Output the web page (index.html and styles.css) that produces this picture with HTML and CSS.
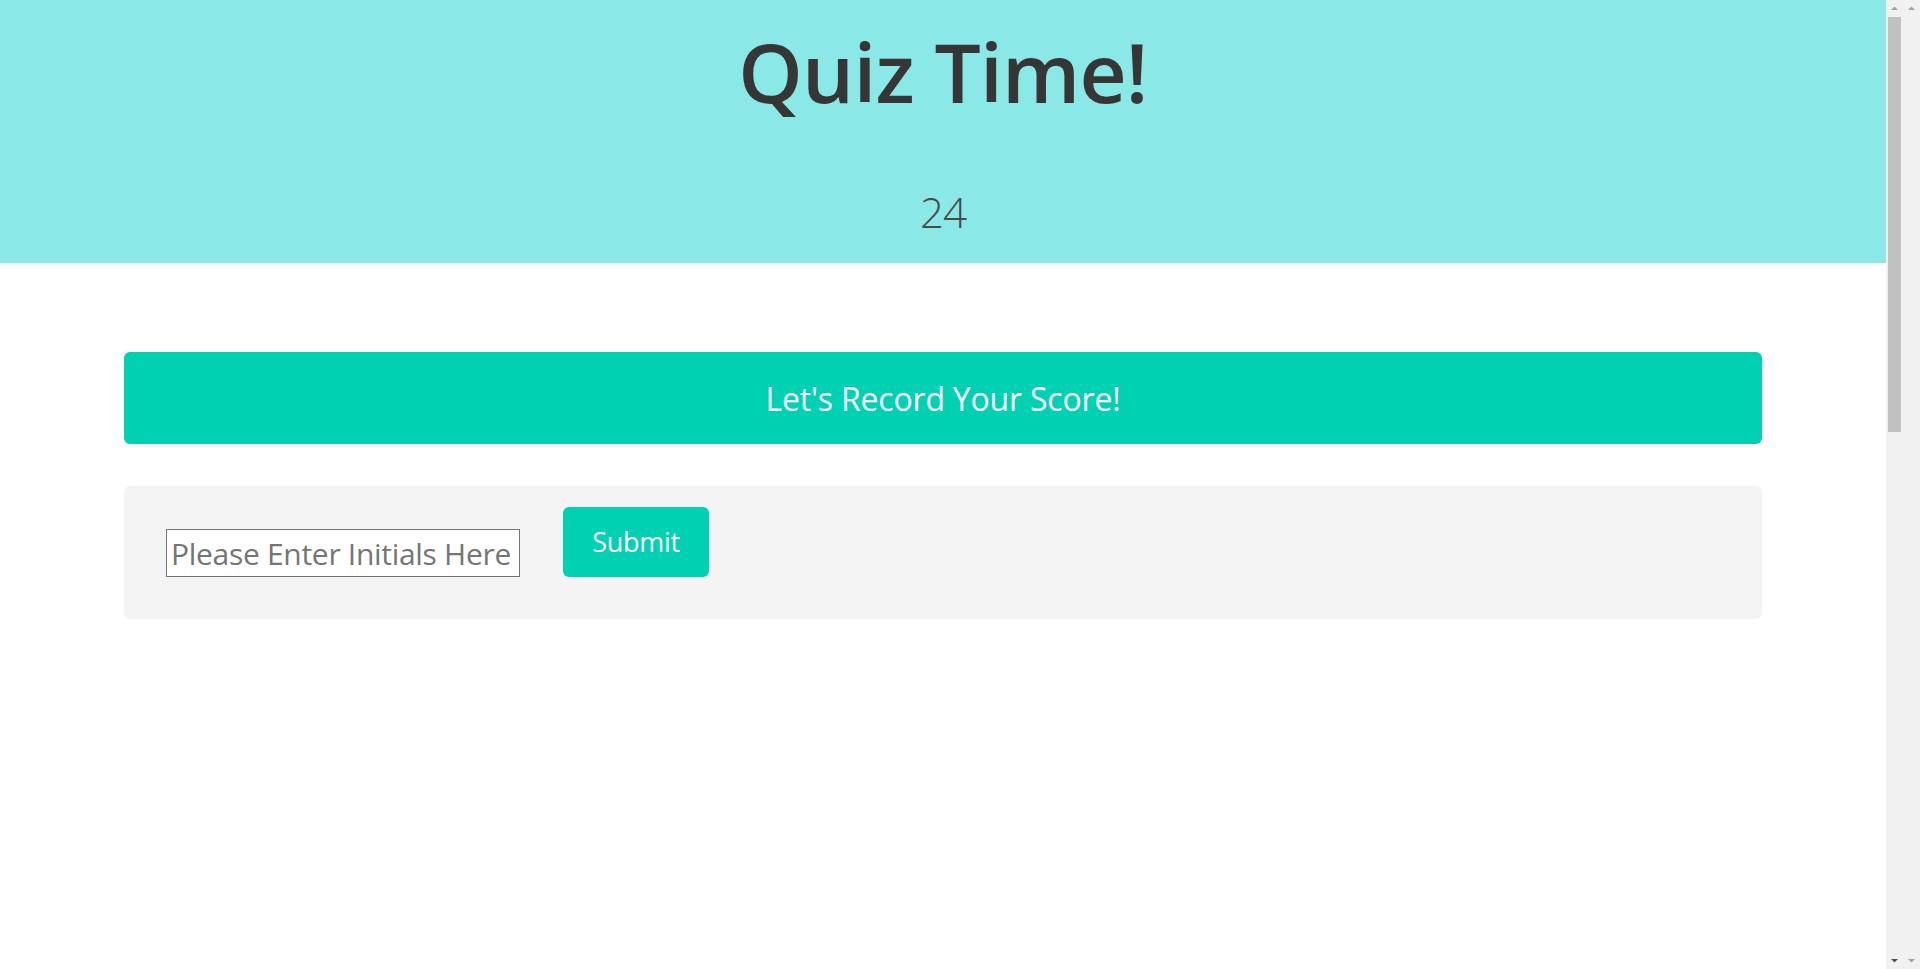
FILE: index.html
```html
<!DOCTYPE html>
<html lang="en">
<head>
<meta charset="utf-8">
<title>Quiz Time!</title>
<link rel="stylesheet" href="styles.css">
</head>
<body>
<div class="window">
  <div class="page">
    <header class="hero">
      <h1 class="title">Quiz Time!</h1>
      <p class="timer">24</p>
    </header>
    <main class="content">
      <div class="banner">Let's Record Your Score!</div>
      <form class="score-form">
        <input class="initials" type="text" placeholder="Please Enter Initials Here">
        <button class="submit" type="button">Submit</button>
      </form>
    </main>
  </div>
  <div class="scrollbar">
    <div class="sb-btn"><svg width="17" height="17" viewBox="0 0 17 17"><path d="M5 10 L12 10 L8.5 6.5 Z" fill="#a3a3a3"/></svg></div>
    <div class="sb-track"><div class="sb-thumb"></div></div>
    <div class="sb-btn"><svg width="17" height="17" viewBox="0 0 17 17"><path d="M5 7 L12 7 L8.5 10.5 Z" fill="#505050"/></svg></div>
  </div>
  <div class="scrollbar outer">
    <div class="sb-btn"><svg width="17" height="17" viewBox="0 0 17 17"><path d="M5 10 L12 10 L8.5 6.5 Z" fill="#a3a3a3"/></svg></div>
    <div class="sb-track"></div>
    <div class="sb-btn"><svg width="17" height="17" viewBox="0 0 17 17"><path d="M5 7 L12 7 L8.5 10.5 Z" fill="#a3a3a3"/></svg></div>
  </div>
</div>
</body>
</html>
```
FILE: styles.css
```css
html, body {
  margin: 0;
  padding: 0;
  height: 100%;
  overflow: hidden;
}
body {
  font-family: "Open Sans", "Noto Sans", sans-serif;
  background: #ffffff;
}
.window {
  display: flex;
  height: 969px;
}
.page {
  flex: 1;
  min-width: 0;
  background: #ffffff;
}
.hero {
  height: 263px;
  box-sizing: border-box;
  background: #8ae8e7;
  display: flex;
  flex-direction: column;
  align-items: center;
  padding-top: 30px;
}
.title {
  margin: 0;
  font-size: 82px;
  line-height: 82px;
  font-weight: 600;
  letter-spacing: -0.8px;
  color: #363636;
}
.timer {
  margin: 79px 0 0;
  font-size: 42px;
  line-height: 42px;
  font-weight: 300;
  letter-spacing: -1px;
  color: #4a4a4a;
}
.content {
  padding: 89px 124px 0;
  display: flex;
  flex-direction: column;
  gap: 42px;
}
.banner {
  height: 92px;
  background: #00d1b2;
  border-radius: 6px;
  color: #ffffff;
  font-size: 32px;
  letter-spacing: -0.2px;
  display: flex;
  align-items: center;
  justify-content: center;
}
.score-form {
  margin: 0;
  background: #f4f4f4;
  border-radius: 6px;
  padding: 21px 42px 42px;
  display: flex;
  align-items: flex-end;
  gap: 43px;
}
.initials {
  box-sizing: border-box;
  width: 354px;
  height: 48px;
  margin: 0;
  border: 1px solid #767676;
  border-radius: 0;
  padding: 0 2px 0 4px;
  font-family: "Open Sans", "Noto Sans", sans-serif;
  font-size: 30px;
  letter-spacing: -0.3px;
  color: #333333;
  background: #ffffff;
}
.initials::placeholder {
  color: #757575;
}
.submit {
  box-sizing: border-box;
  width: 146px;
  height: 70px;
  margin: 0;
  border: none;
  border-radius: 6px;
  background: #00d1b2;
  color: #ffffff;
  font-family: "Open Sans", "Noto Sans", sans-serif;
  font-size: 27px;
  letter-spacing: -0.3px;
  padding: 0 0 2px;
}
.scrollbar {
  width: 17px;
  background: #f1f1f1;
  display: flex;
  flex-direction: column;
}
.sb-btn {
  height: 17px;
}
.sb-btn svg {
  display: block;
}
.sb-track {
  flex: 1;
  padding: 0 2px;
}
.sb-thumb {
  height: 415px;
  background: #c1c1c1;
}
```
